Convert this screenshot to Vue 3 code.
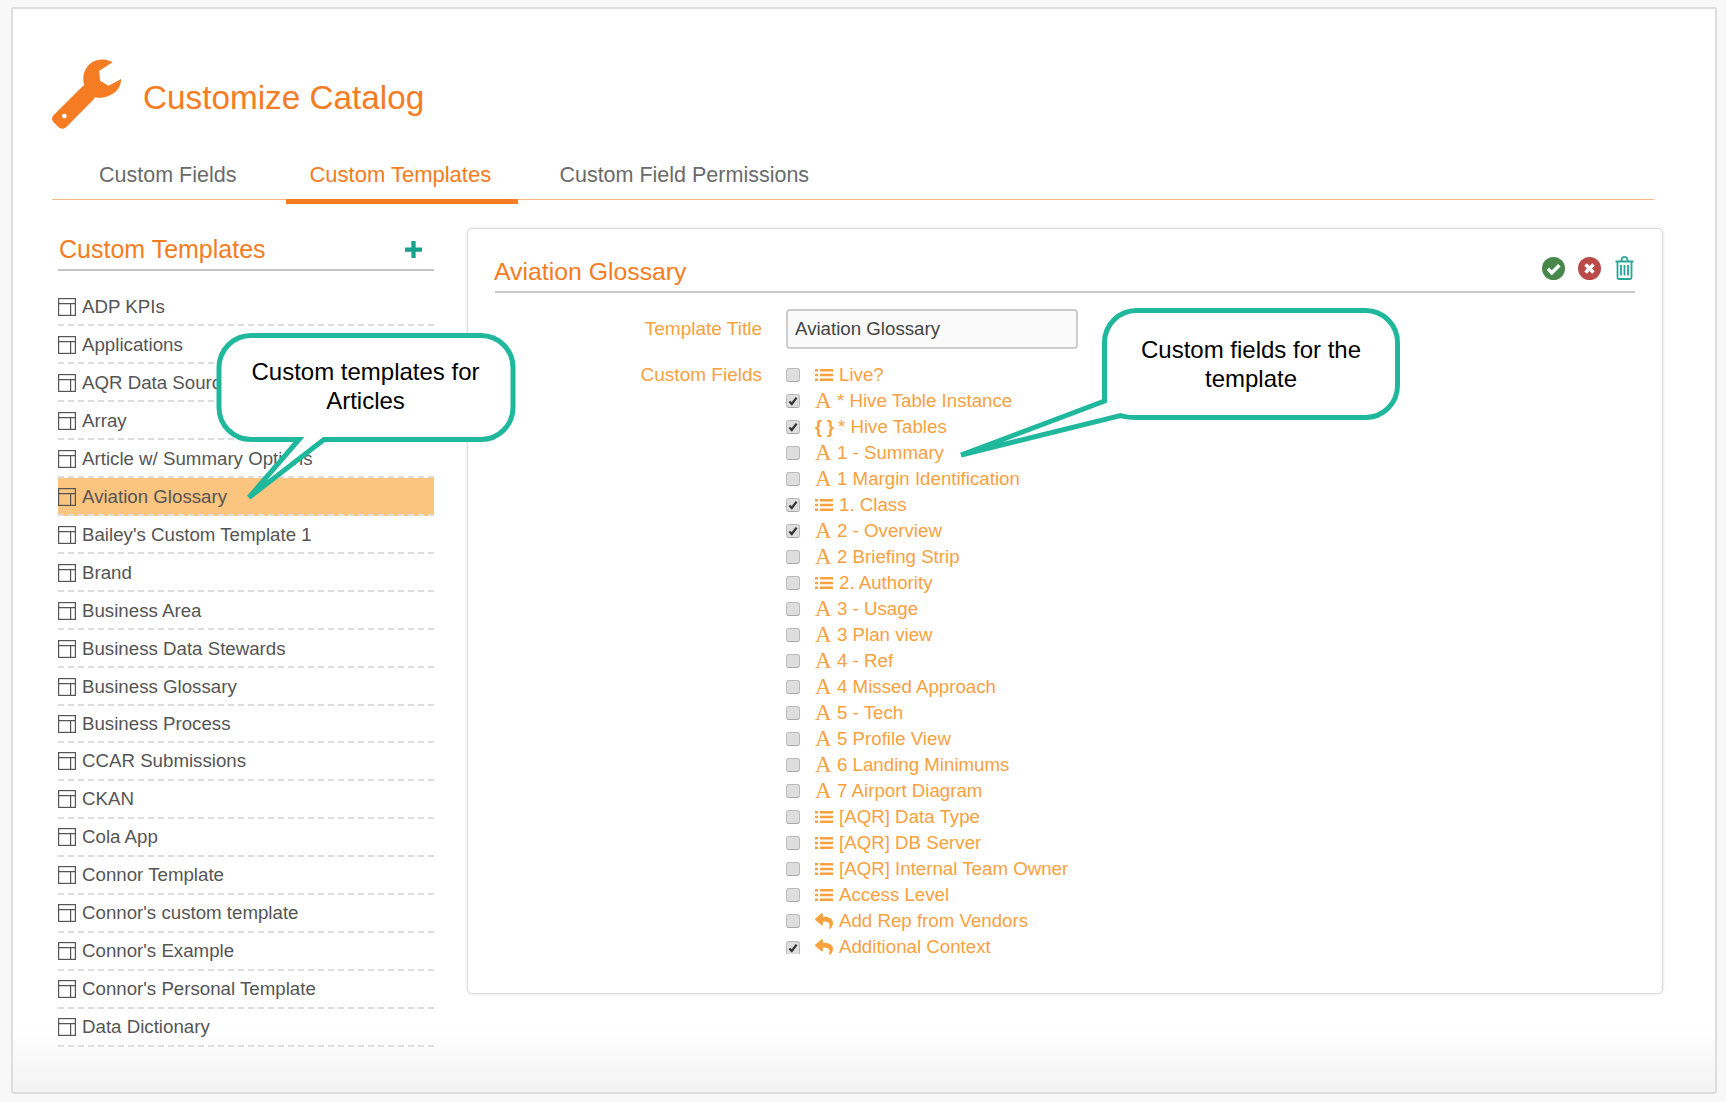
<template>
  <div class="screen">
    <div class="page">
      <header class="title-row">
        <svg class="wrench" viewBox="36 27 210 210">
          <path fill-rule="evenodd" d="M218 37C200 26 172 24 152 40C132 56 125 84 133 106L128 109L42 194C34 202 34 210 41 217L56 232C63 238 72 238 79 231L163 146L163 141C185 148 210 140 228 124C238 114 244 100 243 87L206 107L180 92L178 62ZM73 191a7 7 0 1 0 .01 0z" />
        </svg>
        <h1>Customize Catalog</h1>
      </header>

      <nav class="tabs">
        <a class="tab">Custom Fields</a>
        <a class="tab active">Custom Templates</a>
        <a class="tab last">Custom Field Permissions</a>
      </nav>

      <div class="main">
        <aside class="sidebar">
          <div class="side-head">
            <h2>Custom Templates</h2>
            <svg class="plus" viewBox="0 0 16 16"><path d="M6 0h4v6h6v4h-6v6H6v-6H0V6h6z" /></svg>
          </div>
          <ul class="templates">
            <li v-for="t in templates" :key="t" :class="{ selected: t === 'Aviation Glossary' }">
              <svg class="table-icon" viewBox="0 0 18 18">
                <rect x="0.6" y="0.6" width="16.8" height="16.8" />
                <path d="M0.6 5.6h16.8M12.6 5.6v11.8" />
              </svg>
              <span>{{ t }}</span>
            </li>
          </ul>
        </aside>

        <section class="panel">
          <div class="panel-head">
            <h2>Aviation Glossary</h2>
            <div class="actions">
              <svg viewBox="0 0 22 22">
                <circle cx="11" cy="11" r="11" fill="#47874a" />
                <path d="M5.6 11.2l3.8 3.8 7.2-7.2" fill="none" stroke="#fff" stroke-width="3.4" />
              </svg>
              <svg viewBox="0 0 22 22">
                <circle cx="11" cy="11" r="11" fill="#b94a48" />
                <path d="M7.2 7.2l7.6 7.6M14.8 7.2l-7.6 7.6" fill="none" stroke="#fff" stroke-width="3.4" />
              </svg>
              <svg class="trash" viewBox="0 0 20 24">
                <path d="M1 5.5h18M3 5.5v16a1.5 1.5 0 0 0 1.5 1.5h11a1.5 1.5 0 0 0 1.5-1.5v-16M6.5 5.5l1.2-3.5a1.2 1.2 0 0 1 1-.8h2.600a1.2 1.200 0 0 1 1 .8l1.2 3.5M6.5 9v10.5M10 9v10.5M13.500 9v10.5" fill="none" stroke="#2aa597" stroke-width="1.8" />
              </svg>
            </div>
          </div>

          <div class="form">
            <label class="form-label title-label">Template Title</label>
            <div class="fake-input">Aviation Glossary</div>
            <label class="form-label">Custom Fields</label>
            <ul class="fields">
              <li v-for="f in fields" :key="f.name">
                <span class="check">
                  <svg v-if="f.on" viewBox="0 0 14 14"><path d="M3.4 7.4l2.4 2.6 4.8-6.4" fill="none" stroke="#333" stroke-width="2.2" /></svg>
                </span>
                <span v-if="f.type === 'text'" class="glyph-a">A</span>
                <span v-else-if="f.type === 'json'" class="glyph-json">{ }</span>
                <svg v-else-if="f.type === 'list'" class="glyph-list" viewBox="0 0 18 14">
                  <path d="M0 1h3v2.400H0zM0 5.800h3v2.400H0zM0 10.600h3V13H0zM5 1h13v2.400H5zM5 5.800h13v2.400H5zM5 10.600h13V13H5z" />
                </svg>
                <svg v-else class="glyph-reply" viewBox="0 0 512 512">
                  <path d="M8.309 189.836L184.313 37.851C199.719 24.546 224 35.347 224 56.015v80.053c160.629 1.839 288 34.032 288 186.258 0 61.441-39.581 122.309-83.333 154.132-13.653 9.931-33.111-2.533-28.077-18.631 45.344-145.012-21.507-183.51-176.59-185.742V360c0 20.7-24.3 31.453-39.687 18.164l-176.004-152c-11.071-9.562-11.086-26.753 0-36.328z" />
                </svg>
                <span class="field-name">{{ f.name }}</span>
              </li>
            </ul>
          </div>
        </section>
      </div>
    </div>

    <!-- annotations drawn over the screenshot -->
    <div class="callout callout-a">
      <svg viewBox="0 0 304 170">
        <path d="M35 2.5H265a32 32 0 0 1 32 32V74.500a32 32 0 0 1-32 32H108L33 164.500 83 106.500H35a32 32 0 0 1-32-32V34.500a32 32 0 0 1 32-32z" />
      </svg>
      <p>Custom templates for<br />Articles</p>
    </div>
    <div class="callout callout-b">
      <svg viewBox="0 0 444 154">
        <path d="M179.500 4.500H408.500a32 32 0 0 1 32 32V79.500a32 32 0 0 1-32 32H179.500q-10 0-16-2L4 149 147.500 95V36.500a32 32 0 0 1 32-32z" />
      </svg>
      <p>Custom fields for the<br />template</p>
    </div>
  </div>
</template>

<script setup>
const templates = [
  'ADP KPIs',
  'Applications',
  'AQR Data Source',
  'Array',
  'Article w/ Summary Options',
  'Aviation Glossary',
  "Bailey's Custom Template 1",
  'Brand',
  'Business Area',
  'Business Data Stewards',
  'Business Glossary',
  'Business Process',
  'CCAR Submissions',
  'CKAN',
  'Cola App',
  'Connor Template',
  "Connor's custom template",
  "Connor's Example",
  "Connor's Personal Template",
  'Data Dictionary',
]

const fields = [
  { name: 'Live?', type: 'list', on: false },
  { name: '* Hive Table Instance', type: 'text', on: true },
  { name: '* Hive Tables', type: 'json', on: true },
  { name: '1 - Summary', type: 'text', on: false },
  { name: '1 Margin Identification', type: 'text', on: false },
  { name: '1. Class', type: 'list', on: true },
  { name: '2 - Overview', type: 'text', on: true },
  { name: '2 Briefing Strip', type: 'text', on: false },
  { name: '2. Authority', type: 'list', on: false },
  { name: '3 - Usage', type: 'text', on: false },
  { name: '3 Plan view', type: 'text', on: false },
  { name: '4 - Ref', type: 'text', on: false },
  { name: '4 Missed Approach', type: 'text', on: false },
  { name: '5 - Tech', type: 'text', on: false },
  { name: '5 Profile View', type: 'text', on: false },
  { name: '6 Landing Minimums', type: 'text', on: false },
  { name: '7 Airport Diagram', type: 'text', on: false },
  { name: '[AQR] Data Type', type: 'list', on: false },
  { name: '[AQR] DB Server', type: 'list', on: false },
  { name: '[AQR] Internal Team Owner', type: 'list', on: false },
  { name: 'Access Level', type: 'list', on: false },
  { name: 'Add Rep from Vendors', type: 'reply', on: false },
  { name: 'Additional Context', type: 'reply', on: true },
]
</script>

<style>
html,
body {
  margin: 0;
  background: #f8f8f8;
}
</style>

<style scoped>
.screen {
  position: relative;
  height: 1102px;
  padding: 7px 9px 0 11px;
  box-sizing: border-box;
  font-family: "Liberation Sans", Arial, sans-serif;
  overflow: hidden;
}

.page {
  height: 1087px;
  box-sizing: border-box;
  padding: 0 61px 0 39px;
  background: linear-gradient(#fff 94%, #f3f3f3);
  border: 2px solid #dedede;
  border-radius: 3px;
}

h1,
h2,
ul,
p {
  margin: 0;
  padding: 0;
  font-weight: normal;
}

ul {
  list-style: none;
}

.title-row {
  display: flex;
  align-items: flex-start;
  padding-top: 50px;
  height: 99px;
}

.wrench {
  width: 70px;
  height: 70px;
  flex: none;
  fill: #f57c22;
}

h1 {
  margin: 20px 0 0 21px;
  font-size: 33.3px;
  line-height: 37px;
  color: #f57c22;
}

.tabs {
  display: flex;
  height: 41px;
  border-bottom: 1px solid #f9b98a;
  padding-left: 47px;
}

.tab {
  height: 41px;
  line-height: 34px;
  font-size: 21.5px;
  color: #6b6b6b;
  box-sizing: border-box;
  white-space: nowrap;
}

.tab.active {
  width: 232px;
  margin-left: 50px;
  margin-bottom: -5px;
  padding-left: 23px;
  height: 46px;
  font-size: 22px;
  color: #f57c22;
  border-bottom: 5px solid #f57c22;
}

.tab.last {
  margin-left: 41px;
}

.main {
  display: flex;
  margin-top: 28px;
}

.sidebar {
  flex: none;
  width: 376px;
  margin-left: 6px;
}

.side-head {
  display: flex;
  justify-content: space-between;
  align-items: center;
  height: 41px;
  border-bottom: 2px solid #c4c4c4;
  padding: 0 12px 0 1px;
}

.side-head h2 {
  font-size: 25px;
  padding-top: 2px;
  color: #f57c22;
}

.plus {
  width: 17px;
  height: 17px;
  margin-top: 1px;
  fill: #16a08e;
}

.templates {
  margin-top: 17px;
}

.templates li {
  display: flex;
  align-items: center;
  gap: 6px;
  height: 38px;
  box-sizing: border-box;
  border-bottom: 2px dashed #ddd;
  font-size: 18.7px;
  color: #555;
  padding-top: 2px;
}

/* the lower part of the list sits a little higher in the capture */
.templates li:nth-child(12) {
  height: 37px;
}

.templates li:nth-child(n + 12) {
  padding-top: 0;
}

.templates li.selected {
  background: #fbc47f;
}

.table-icon {
  width: 18px;
  height: 18px;
  flex: none;
  fill: none;
  stroke: #555;
  stroke-width: 1.2;
}

.panel {
  flex: none;
  width: 1196px;
  height: 766px;
  margin-left: 33px;
  box-sizing: border-box;
  padding: 0 27px;
  background: #fff;
  border: 1px solid #ddd;
  border-radius: 5px;
  box-shadow: 0 0 3px rgba(0, 0, 0, 0.12);
}

.panel-head {
  display: flex;
  justify-content: space-between;
  align-items: flex-start;
  height: 64px;
  box-sizing: border-box;
  border-bottom: 2px solid #c8c8c8;
  padding-top: 29px;
}

.panel-head h2 {
  font-size: 24.8px;
  line-height: 28px;
  margin-left: -1px;
  color: #f57c22;
}

.actions {
  display: flex;
  gap: 13px;
  margin-top: -1px;
}

.actions svg {
  width: 23px;
  height: 23px;
}

.actions .trash {
  width: 21px;
  height: 24px;
  margin-top: -1px;
}

.form {
  display: grid;
  grid-template-columns: 267px 1fr;
  column-gap: 24px;
  margin-top: 16px;
  align-items: start;
}

.form-label {
  text-align: right;
  font-size: 19px;
  color: #f9a13e;
  line-height: 26px;
}

.title-label {
  line-height: 40px;
}

.fake-input {
  width: 292px;
  height: 40px;
  box-sizing: border-box;
  border: 2px solid #ccc;
  border-radius: 4px;
  background: #fafafa;
  padding-left: 7px;
  font-size: 18.7px;
  line-height: 36px;
  color: #444;
  margin-bottom: 13px;
}

.fields li {
  display: flex;
  align-items: center;
  height: 26px;
  font-size: 18.7px;
  color: #f9a13e;
}

.check {
  width: 14px;
  height: 14px;
  flex: none;
  margin-right: 15px;
  border-radius: 3px;
  background: #dedede;
  border: 1px solid #bbb;
  border-bottom-color: #a9a9a9;
  box-sizing: border-box;
  display: flex;
}

.check svg {
  width: 14px;
  height: 14px;
  margin: -1px;
}

.fields li:last-child .check {
  height: 13px;
  border-radius: 3px 3px 0 0;
  border-bottom: none;
}

.glyph-a {
  width: 22px;
  font-family: "Liberation Serif", serif;
  font-size: 23px;
  line-height: 26px;
}

.glyph-json {
  width: 23px;
  font-weight: bold;
  font-size: 18px;
  white-space: nowrap;
}

.glyph-list {
  width: 18px;
  height: 14px;
  margin-right: 6px;
  fill: #f9a13e;
}

.glyph-reply {
  width: 18px;
  height: 18px;
  margin-right: 6px;
  fill: #f9a13e;
}

.callout {
  position: absolute;
}

.callout svg {
  display: block;
  width: 100%;
  height: 100%;
  fill: #fff;
  stroke: #20b89c;
  stroke-width: 5;
}

.callout p {
  position: absolute;
  text-align: center;
  font-family: "Liberation Sans", Arial, sans-serif;
  color: #000;
  font-size: 24px;
  line-height: 29px;
  white-space: nowrap;
}

.callout-a {
  left: 215.5px;
  top: 332.5px;
  width: 304px;
  height: 170px;
}

.callout-a p {
  left: 0;
  width: 300px;
  top: 24.5px;
}

.callout-b {
  left: 957px;
  top: 306px;
  width: 444px;
  height: 154px;
}

.callout-b p {
  left: 147px;
  width: 294px;
  top: 29px;
}
</style>
